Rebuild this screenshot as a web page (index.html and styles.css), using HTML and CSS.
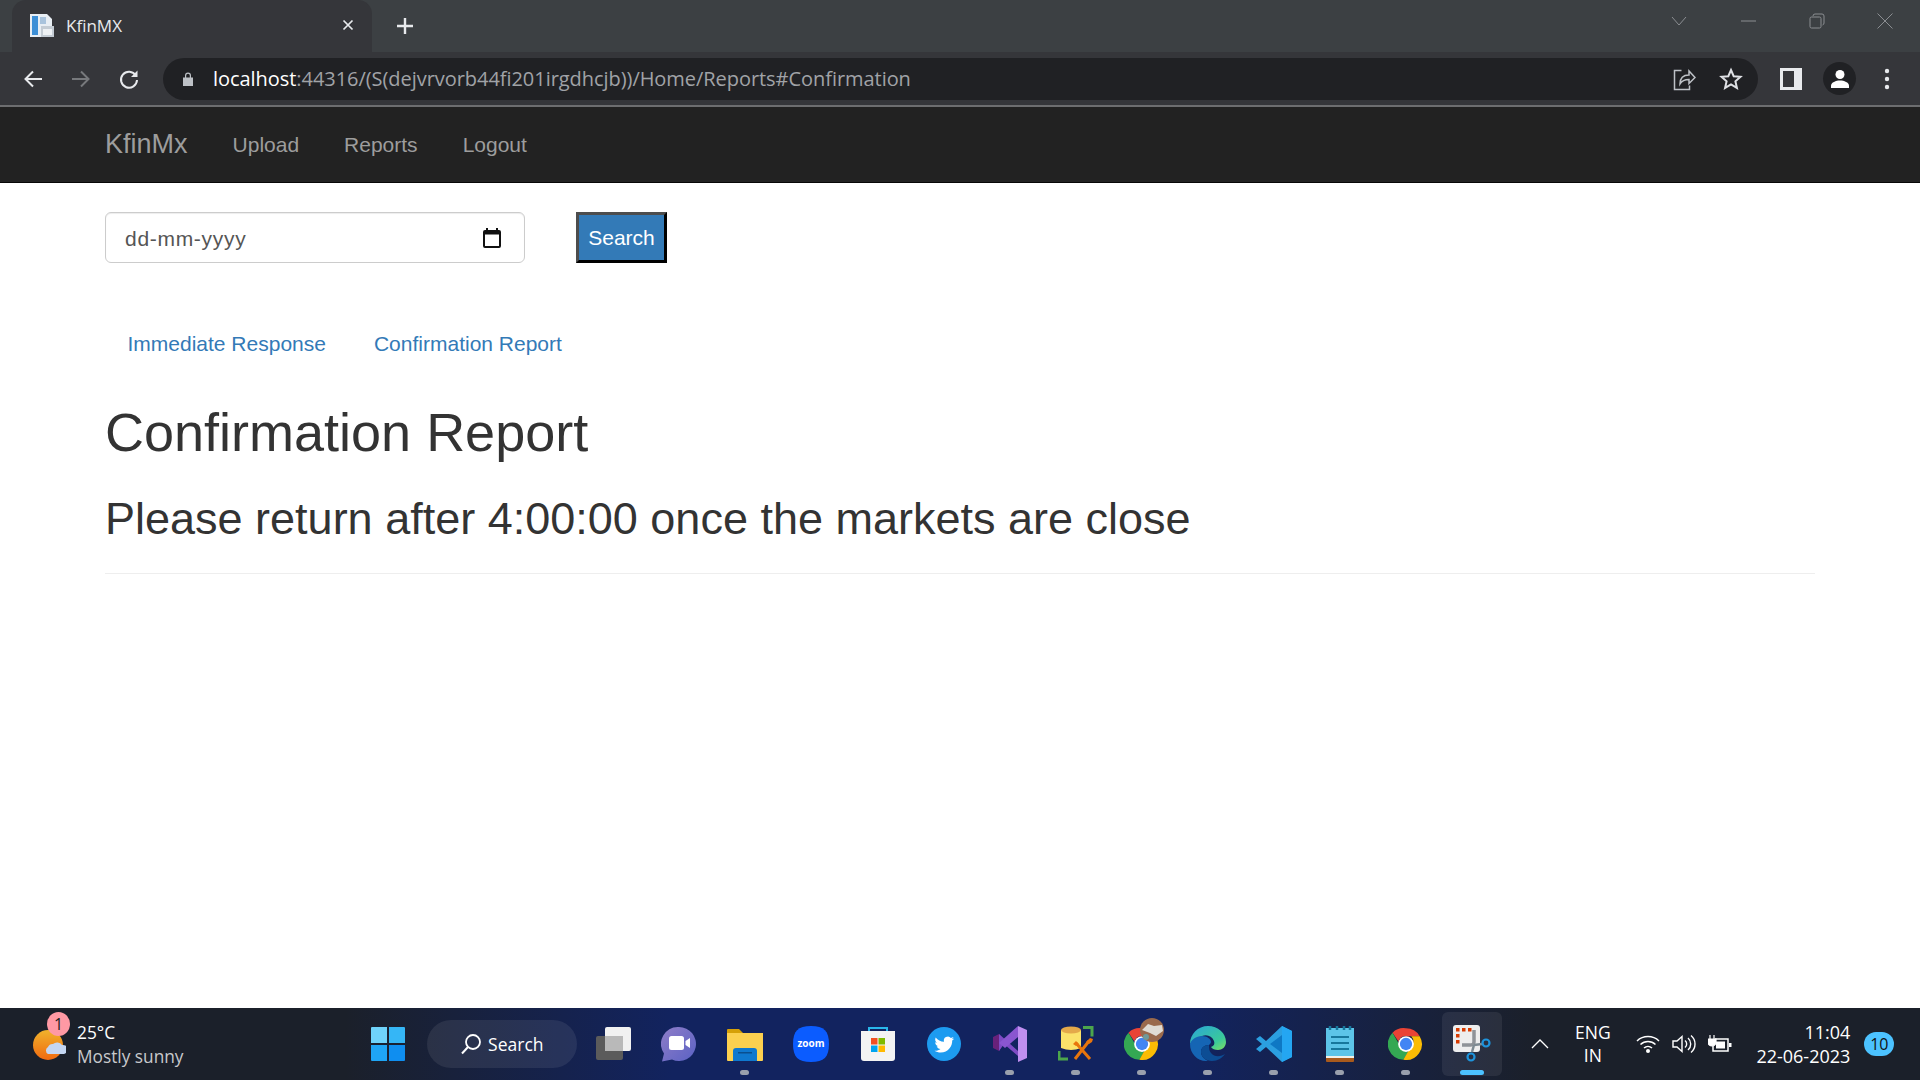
FILE: index.html
```html
<!DOCTYPE html>
<html lang="en">
<head>
	<meta charset="UTF-8">
	<title>KfinMX</title>
	<link rel="stylesheet" href="styles.css">
</head>
<body>
	<svg class="defs" width="0" height="0">
		<symbol id="chrome" viewBox="0 0 48 48">
			<path fill="#ea4335" d="M24 3a21 21 0 0 1 18.2 10.5H24a10.5 10.5 0 0 0-10 7.2L6 8.900A21 21 0 0 1 24 3z"/>
			<path fill="#34a853" d="M6 8.900l9 15.600a10.500 10.500 0 0 0 12.400 9.400l-7 11A21 21 0 0 1 6 8.900z"/>
			<path fill="#fbbc04" d="M42.200 13.500A21 21 0 0 1 20.400 44.900l9-15.500A10.500 10.500 0 0 0 31 13.500z"/>
			<circle cx="24" cy="24" r="10.500" fill="#fff"/>
			<circle cx="24" cy="24" r="8.200" fill="#4285f4"/>
		</symbol>
	</svg>

	<div class="tabstrip">
		<div class="tab">
			<svg class="favicon" width="24" height="23" viewBox="0 0 24 23">
				<path fill="#e8eef4" d="M0 0h17l5 5v18H0z"/>
				<path fill="#3d8fd6" d="M2 2h6v19H2z"/>
				<path fill="#a9c3dc" d="M10 3h6v7h-6z"/>
				<path fill="#c4ccd4" d="M11 12h13v11H11z"/>
				<path fill="#eef1f4" d="M13 15h9v6h-9z"/>
			</svg>
			<span class="tab-title">KfinMX</span>
			<svg class="tab-close" width="12" height="12" viewBox="0 0 12 12"><path d="M1.500 1.500l9 9M10.500 1.500l-9 9" stroke="#e8eaed" stroke-width="1.700"/></svg>
		</div>
		<svg class="newtab" width="20" height="20" viewBox="0 0 20 20"><path d="M10 2v16M2 10h16" stroke="#e8eaed" stroke-width="2.400"/></svg>
		<div class="winbtns">
			<svg class="win-chevron" width="16" height="16" viewBox="0 0 16 16"><path d="M1 4l7 8 7-8" fill="none" stroke="#8b8e92"/></svg>
			<svg width="16" height="16" viewBox="0 0 16 16"><path d="M0 8h15" stroke="#8b8e92"/></svg>
			<svg width="16" height="16" viewBox="0 0 16 16"><path d="M1 5.500a1.500 1.500 0 0 1 1.500-1.500h8a1.500 1.500 0 0 1 1.500 1.500v8a1.500 1.500 0 0 1-1.500 1.500h-8a1.500 1.500 0 0 1-1.500-1.500zM4 3a2 2 0 0 1 2-2h7a2 2 0 0 1 2 2v7a2 2 0 0 1-1.500 2" fill="none" stroke="#8b8e92"/></svg>
			<svg width="16" height="16" viewBox="0 0 16 16"><path d="M.5.500l15 15M15.500.500l-15 15" stroke="#8b8e92"/></svg>
		</div>
	</div>

	<div class="toolbar">
		<svg class="tool-btn" width="22" height="22" viewBox="0 0 22 22"><path d="M20 11H4M11 3.500L3.500 11l7.500 7.500" fill="none" stroke="#e8eaed" stroke-width="2"/></svg>
		<svg class="tool-btn" width="22" height="22" viewBox="0 0 22 22"><path d="M2 11h16M11 3.500l7.500 7.500-7.500 7.500" fill="none" stroke="#77797c" stroke-width="2"/></svg>
		<svg class="tool-btn" width="22" height="22" viewBox="0 0 22 22"><path d="M17.800 7.500A8 8 0 1 0 19 12" fill="none" stroke="#e8eaed" stroke-width="2"/><path fill="#e8eaed" d="M19.500 2.500V9h-6.500z"/></svg>
		<div class="omnibox">
			<svg class="lock" width="12" height="16" viewBox="0 0 12 16"><path fill="#bdc1c6" d="M1 6.500h10V15H1zM3 6.500V4.500a3 3 0 0 1 6 0v2H7.800v-2a1.800 1.800 0 0 0-3.600 0v2z"/></svg>
			<span class="url"><b>localhost</b>:44316/(S(dejvrvorb44fi201irgdhcjb))/Home/Reports#Confirmation</span>
			<svg class="omni-share" width="24" height="24" viewBox="0 0 24 24"><path d="M9.500 3.500H2.500v19h15v-4M8 17c0-6 3-9 9-9V4l6 6.500-6 6v-4c-4 0-7 1-9 4.500z" fill="none" stroke="#bdc1c6" stroke-width="1.500"/></svg>
			<svg class="omni-star" width="24" height="24" viewBox="0 0 24 24"><path d="M12 3l2.700 6.200 6.800.6-5.100 4.500 1.500 6.600L12 17.400l-5.900 3.500 1.500-6.600-5.100-4.500 6.800-.6z" fill="none" stroke="#dfe1e5" stroke-width="2"/></svg>
		</div>
		<svg class="side-panel" width="22" height="22" viewBox="0 0 22 22"><path fill="#e8eaed" fill-rule="evenodd" d="M0 0h22v22H0zM3 3v16h11V3z"/></svg>
		<div class="avatar">
			<svg width="20" height="20" viewBox="0 0 20 20"><circle cx="10" cy="5.500" r="4.500" fill="#fff"/><path fill="#fff" d="M1 19v-2.500c0-3 5-5 9-5s9 2 9 5V19z"/></svg>
		</div>
		<svg class="menu-dots" width="6" height="22" viewBox="0 0 6 22"><circle cx="3" cy="3" r="2.200" fill="#e8eaed"/><circle cx="3" cy="11" r="2.200" fill="#e8eaed"/><circle cx="3" cy="19" r="2.200" fill="#e8eaed"/></svg>
	</div>

	<nav class="navbar">
		<a class="brand">KfinMx</a>
		<a class="nav-link">Upload</a>
		<a class="nav-link">Reports</a>
		<a class="nav-link">Logout</a>
	</nav>

	<div class="container">
		<form class="search-row">
			<div class="date-input">
				<span>dd-mm-yyyy</span>
				<svg width="18" height="20" viewBox="0 0 18 20"><path fill="#111" fill-rule="evenodd" d="M3 0h2v2h8V0h2v2h1a2 2 0 0 1 2 2v14a2 2 0 0 1-2 2H2a2 2 0 0 1-2-2V4a2 2 0 0 1 2-2h1zM2 6.500V18h14V6.500z"/></svg>
			</div>
			<button class="search-btn" type="button">Search</button>
		</form>
		<ul class="pills">
			<li>Immediate Response</li>
			<li>Confirmation Report</li>
		</ul>
		<h2 class="report-title">Confirmation Report</h2>
		<h3 class="report-msg">Please return after 4:00:00 once the markets are close</h3>
		<hr class="rule">
	</div>

	<div class="taskbar">
		<div class="weather">
			<svg class="weather-icon" width="33" height="32" viewBox="0 0 33 32">
				<defs><linearGradient id="sun" x1="0" y1="0" x2="0" y2="1"><stop offset="0" stop-color="#f0b22c"/><stop offset="1" stop-color="#f06a10"/></linearGradient></defs>
				<circle cx="15" cy="16" r="15" fill="url(#sun)"/>
				<path fill="#c4d6f2" d="M15 25a4 4 0 0 1 0-7 5 5 0 0 1 5-3 6 6 0 0 1 9 1 4.500 4.500 0 0 1 2 9z"/>
			</svg>
			<span class="weather-badge">1</span>
			<div class="weather-text">
				<div>25°C</div>
				<div class="weather-sub">Mostly sunny</div>
			</div>
		</div>
		<div class="task-icons">
			<div class="slot">
				<svg width="36" height="36" viewBox="0 0 36 36"><path fill="#6fd3fb" d="M1 2a1 1 0 0 1 1-1h15v16H1z"/><path fill="#35b6f6" d="M19 1h15a1 1 0 0 1 1 1v15H19z"/><path fill="#1fa5f5" d="M1 19h16v16H2a1 1 0 0 1-1-1z"/><path fill="#0f8ef0" d="M19 19h16v15a1 1 0 0 1-1 1H19z"/></svg>
			</div>
			<div class="search-pill">
				<svg width="22" height="22" viewBox="0 0 22 22"><circle cx="13" cy="9" r="7" fill="none" stroke="#fff" stroke-width="1.800"/><path d="M8 14l-6 6.500" stroke="#fff" stroke-width="2"/></svg>
				<span>Search</span>
			</div>
			<div class="slot">
				<svg width="36" height="36" viewBox="0 0 36 36"><rect x="10" y="1" width="26" height="24" rx="2" fill="#f1f1f1"/><rect x="1" y="10" width="27" height="24" rx="2" fill="#5b5b5b"/><path fill="#b9b9b9" d="M10 10h18v15H10z"/></svg>
			</div>
			<div class="slot">
				<svg width="36" height="36" viewBox="0 0 36 36"><defs><linearGradient id="chat" x1="0" y1="0" x2="1" y2="1"><stop offset="0" stop-color="#8f7dc8"/><stop offset="1" stop-color="#5a62c4"/></linearGradient></defs><path fill="url(#chat)" d="M18 1a17 17 0 1 1-7 32.500L1 35.500l2-8A17 17 0 0 1 18 1z"/><rect x="8" y="10" width="15" height="14" rx="2.500" fill="#fff"/><path fill="#fff" d="M24.500 15l4.500-3v10l-4.500-3z"/></svg>
			</div>
			<div class="slot has-dot">
				<svg width="36" height="36" viewBox="0 0 36 36"><path fill="#d6a008" d="M0 4a1 1 0 0 1 1-1h11l4 4h20v4H0z"/><path fill="#fcd04f" d="M0 7h36v27a1 1 0 0 1-1 1H1a1 1 0 0 1-1-1z"/><path fill="#0f78cf" d="M6 35V25a3 3 0 0 1 3-3h18a3 3 0 0 1 3 3v10z"/><path fill="#0a4f8f" d="M11 26h14v1.500H11z"/></svg>
			</div>
			<div class="slot">
				<svg width="36" height="36" viewBox="0 0 36 36"><path fill="#0b5cff" d="M18 0c13 0 18 5 18 18s-5 18-18 18S0 31 0 18 5 0 18 0z"/><text x="18" y="21" class="zoom-word">zoom</text></svg>
			</div>
			<div class="slot">
				<svg width="36" height="36" viewBox="0 0 36 36"><path d="M9 9V2h18v7" fill="none" stroke="#29b6ea" stroke-width="2"/><path fill="#f3f3f3" d="M1 5h34v27a3 3 0 0 1-3 3H4a3 3 0 0 1-3-3z"/><path fill="#f25022" d="M11 12h6.500v6.500H11z"/><path fill="#7fba00" d="M18.500 12H25v6.500h-6.500z"/><path fill="#00a4ef" d="M11 19.500h6.500V26H11z"/><path fill="#ffb900" d="M18.500 19.500H25V26h-6.500z"/></svg>
			</div>
			<div class="slot">
				<svg width="34" height="34" viewBox="0 0 34 34"><circle cx="17" cy="17" r="17" fill="#1d9bf0"/><path fill="#fff" d="M27 11.500c-.8.400-1.500.500-2.300.700.800-.500 1.500-1.200 1.800-2.200-.8.500-1.600.800-2.600 1a4 4 0 0 0-6.900 3.700c-3.400-.2-6.300-1.800-8.300-4.300-1 1.800-.500 4.100 1.300 5.300-.7 0-1.300-.2-1.800-.500 0 2 1.400 3.700 3.300 4-.6.200-1.200.2-1.800.1.500 1.600 2 2.800 3.800 2.800-1.700 1.300-3.900 2-6 1.700 1.800 1.200 4 1.800 6.200 1.800 7.500 0 11.800-6.400 11.500-12 .8-.500 1.400-1.200 1.800-2.100z"/></svg>
			</div>
			<div class="slot has-dot">
				<svg width="36" height="36" viewBox="0 0 36 36"><path fill="#68217a" d="M1 11l6-3 6 7-6 10-6-3z"/><path fill="#7e4bc4" d="M7 8l19 17v5L12 18l-5 7V8z"/><path fill="#8a56d0" d="M26 0v11L13 22l-6-5z"/><path fill="#c08ff0" d="M26 0l9 4v28l-9 4z"/></svg>
			</div>
			<div class="slot has-dot">
				<svg width="36" height="36" viewBox="0 0 36 36"><path fill="#fbe26a" d="M3 4h20v18q-10 4-20 0z"/><ellipse cx="13" cy="4" rx="10" ry="3.500" fill="#e4a94a"/><path d="M1 25v8h9" fill="none" stroke="#4ca64c" stroke-width="3"/><path d="M25 1.500h9v9" fill="none" stroke="#4ca64c" stroke-width="3"/><path d="M18 17l14 16M31 15L17 33" stroke="#e8750c" stroke-width="3" fill="none"/><path d="M28 16l4-4 3 1-1 3-3 2zM15 18l3-3 3 3-3 2z" fill="#e8750c"/></svg>
			</div>
			<div class="slot has-dot">
				<svg class="chrome-icon" width="36" height="36"><use href="#chrome"/></svg>
				<svg class="profile-badge" width="24" height="24" viewBox="0 0 24 24"><circle cx="12" cy="12" r="12" fill="#9a6a4c"/><path fill="#e0dcd4" d="M2 12l6-6 6 2 8-1 1 6-7 5-6-3z"/><circle cx="6" cy="19" r="3" fill="#6f9a9a"/></svg>
			</div>
			<div class="slot has-dot">
				<svg width="36" height="36" viewBox="0 0 36 36"><defs><linearGradient id="edge" x1="0" y1="0" x2="1" y2="1"><stop offset="0" stop-color="#2aa5d8"/><stop offset=".7" stop-color="#3ac99a"/><stop offset="1" stop-color="#7fe060"/></linearGradient></defs><path fill="url(#edge)" d="M18 0c10 0 18 7 18 16 0 5-4 8-8 8-3 0-6-1-7-3 3-1 4-3 3-6-2-5-7-7-12-5C6 12 1 17 0 18 0 8 8 0 18 0z"/><path fill="#1565b4" d="M0 18c1-4 6-8 12-8 5 0 9 3 9 6 0 1-1 2-2 3-5 0-8 3-8 7 0 4 3 7 7 9-10 1-18-7-18-17z"/><path fill="#0c4d94" d="M19 19c-5 0-8 3-8 7 0 5 5 9 11 9 6 0 10-3 13-7-3 2-10 4-14-1-2-2-2-5-2-8z"/></svg>
			</div>
			<div class="slot has-dot">
				<svg width="36" height="36" viewBox="0 0 36 36"><path fill="#2b9fe0" d="M26 0l10 5v26l-10 5-16-15-6 5-4-3 6-5-6-5 4-3 6 5z"/><path fill="#0e78c4" d="M26 9L14 18l12 9z"/><path fill="#24a6f2" d="M26 0l10 5v26l-10 5z"/></svg>
			</div>
			<div class="slot has-dot">
				<svg width="28" height="36" viewBox="0 0 28 36"><path fill="#5cc4e8" d="M0 2h28v31H0z"/><path fill="#f0f0e8" d="M0 30h28v2H0z"/><path fill="#a85a1c" d="M0 32h28v3a1 1 0 0 1-1 1H1a1 1 0 0 1-1-1z"/><path d="M5 11h18M5 17h18M5 23h18" stroke="#17779c" stroke-width="2"/><path d="M4 0v4M11 0v4M18 0v4M24 0v4" stroke="#17779c" stroke-width="2.500"/></svg>
			</div>
			<div class="slot has-dot">
				<svg width="36" height="36"><use href="#chrome"/></svg>
			</div>
			<div class="slot snip">
				<svg width="38" height="38" viewBox="0 0 38 38"><rect x="0" y="0" width="27" height="27" rx="3" fill="#eee"/><path d="M3 3h3.500v3.500H3zM9 3h3.500v3.500H9zM15 3h3.500v3.500H15zM3 9h3.500v3.500H3zM3 15h3.500v3.500H3z" fill="#d83b01"/><path d="M21 5v12a3 3 0 0 1-3 3H9" fill="none" stroke="#8f9398" stroke-width="3.500"/><path d="M21 20l8-1M21 20l-2 7" stroke="#7e8a92" stroke-width="2.500"/><circle cx="33" cy="18" r="3.500" fill="none" stroke="#1e94dc" stroke-width="2.200"/><circle cx="18" cy="32" r="3.500" fill="none" stroke="#1e94dc" stroke-width="2.200"/></svg>
			</div>
		</div>
		<div class="tray">
			<svg class="tray-caret" width="18" height="10" viewBox="0 0 18 10"><path d="M1 9l8-8 8 8" fill="none" stroke="#fff" stroke-width="1.300"/></svg>
			<div class="lang">ENG<br>IN</div>
			<svg class="tray-icon" width="24" height="20" viewBox="0 0 24 20"><path d="M1 7a16 16 0 0 1 22 0M4.500 10.500a11 11 0 0 1 15 0M8 14a6 6 0 0 1 8 0" fill="none" stroke="#fff" stroke-width="1.500"/><circle cx="12" cy="17" r="2" fill="#fff"/></svg>
			<svg class="tray-icon" width="24" height="20" viewBox="0 0 24 20"><path d="M1 7v6h4l5 4.500V2.500L5 7z" fill="none" stroke="#fff" stroke-width="1.400"/><path d="M13 6.500a4.500 4.500 0 0 1 0 7M16 4a8 8 0 0 1 0 12M19 1.500a11 11 0 0 1 0 17" fill="none" stroke="#fff" stroke-width="1.400"/></svg>
			<svg class="tray-icon" width="24" height="20" viewBox="0 0 24 20"><path d="M2 1v4M6 1v4M0 5h8v3a4 4 0 0 1-8 0z" stroke="#fff" fill="#fff" stroke-width="1.200"/><path d="M7 5h13v12H5v-5" fill="none" stroke="#fff" stroke-width="1.500"/><path fill="#fff" d="M8 7.500h9v7H8zM21 9h2.500v4H21z"/></svg>
			<div class="clock"><div>11:04</div><div>22-06-2023</div></div>
			<span class="notif">10</span>
		</div>
	</div>
</body>
</html>
```

FILE: styles.css
```css
* {margin: 0;padding: 0;box-sizing: border-box;}
html, body {width: 1920px;height: 1080px;overflow: hidden;}
body {display: flex;flex-direction: column;background: #fff;font-family: "Liberation Sans", Arial, sans-serif;color: #333;}
svg {display: block;flex: none;}
.defs {position: absolute;}

/* browser chrome */
.tabstrip {display: flex;align-items: flex-end;height: 52px;background: #3c4043;flex: none;}
.tab {display: flex;align-items: center;width: 360px;height: 52px;margin-left: 12px;padding: 0 18px 2px 18px;background: #35363a;border-radius: 14px 14px 0 0;}
.tab-title {flex: 1;margin-left: 12px;font: 17px "Open Sans", sans-serif;color: #e8eaed;}
.newtab {margin: 0 0 16px 23px;}
.winbtns {display: flex;gap: 52px;margin: 0 27px 23px auto;}
.win-chevron {margin-right: 2px;}
.toolbar {display: flex;align-items: center;height: 53px;background: #35363a;padding-left: 22px;flex: none;}
.tool-btn {margin-right: 26px;}
.tool-btn:nth-child(3) {margin-right: 23px;}
.omnibox {display: flex;align-items: center;width: 1595px;height: 42px;background: #202124;border-radius: 21px;padding: 0 15px 0 19px;}
.url {flex: 1;margin-left: 19px;font: 20px "Open Sans", sans-serif;letter-spacing: -.05px;color: #a0a3a7;white-space: nowrap;}
.url b {font-weight: 400;color: #fff;}
.omni-share {margin-right: 23px;}
.side-panel {margin-left: 22px;}
.avatar {display: flex;align-items: center;justify-content: center;width: 33px;height: 33px;margin-left: 21px;background: #202124;border-radius: 50%;}
.menu-dots {margin-left: 28px;}

/* page */
.navbar {display: flex;align-items: center;height: 78px;padding-left: 105px;background: #222;border-top: 2px solid #6d6e70;border-bottom: 1px solid #080808;flex: none;}
.brand {font-size: 27px;color: #9d9d9d;margin-right: 45px;}
.nav-link {font-size: 21px;color: #9d9d9d;margin-right: 45px;}
.container {flex: 1;padding: 29px 105px 0;}
.search-row {display: flex;gap: 51px;}
.date-input {display: flex;align-items: center;justify-content: space-between;width: 420px;height: 51px;padding: 2px 23px 0 19px;border: 1px solid #ccc;border-radius: 6px;font-size: 21px;letter-spacing: .7px;color: #555;box-shadow: inset 0 1px 1px rgba(0,0,0,.075);}
.date-input svg {margin-top: -2px;}
.search-btn {width: 91px;height: 51px;font: 21px "Liberation Sans", Arial, sans-serif;color: #fff;background: #337ab7;border: 3px solid;border-color: #4d4d4d #000 #000 #4d4d4d;}
.pills {display: flex;gap: 3px;margin-top: 51px;list-style: none;}
.pills li {padding: 15px 22.500px;font-size: 21px;line-height: 30px;color: #337ab7;}
.report-title {margin-top: 28px;font-size: 54px;line-height: 60px;font-weight: 400;}
.report-msg {margin-top: 32px;font-size: 45px;line-height: 50px;font-weight: 400;}
.rule {margin-top: 29px;border: 0;border-top: 1px solid #eee;}

/* windows taskbar */
.taskbar {display: flex;align-items: center;height: 72px;flex: none;color: #fff;background: linear-gradient(90deg, #1b202a 0, #1b202a 18%, #12235f 35%, #12235f 62%, #1b202a 80%, #1b202a 100%);font-family: "Open Sans", "Noto Sans", sans-serif;}
.weather {position: relative;display: flex;align-items: center;width: 355px;padding-left: 33px;}
.weather-icon {margin-top: 2px;}
.weather-badge {position: absolute;left: 47px;top: -7px;width: 23px;height: 24px;border-radius: 50%;background: #ff99a4;color: #222;font-size: 16px;line-height: 24px;text-align: center;}
.weather-text {margin: 2px 0 0 11px;font-size: 17.300px;line-height: 24px;}
.weather-sub {color: #c8c9cc;}
.task-icons {display: flex;align-items: center;}
.slot {position: relative;display: flex;align-items: center;justify-content: center;width: 66.100px;height: 64px;border-radius: 6px;}
.has-dot::after {content: "";position: absolute;left: 28px;bottom: 1px;width: 9px;height: 5px;border-radius: 3px;background: #9aa0ad;}
.snip {background: rgba(255,255,255,.07);width: 60px;margin: 0 3px;}
.snip::after {content: "";position: absolute;left: 18px;bottom: 1px;width: 24px;height: 5px;border-radius: 3px;background: #4cc2ff;}
.profile-badge {position: absolute;left: 31px;top: 6px;}
.zoom-word {font: 700 10px "Open Sans", sans-serif;fill: #fff;text-anchor: middle;}
.search-pill {display: flex;align-items: center;gap: 6px;width: 150px;height: 48px;margin: 0 3px 0 6px;padding-left: 33px;border-radius: 24px;background: rgba(255,255,255,.08);font-size: 17.500px;}
.tray {display: flex;align-items: center;margin-left: 26px;}
.lang {width: 87px;text-align: center;font-size: 17.500px;line-height: 23px;}
.tray-icon {margin-left: 12px;}
.lang + .tray-icon {margin-left: 0;}
.clock {width: 118px;text-align: right;font-size: 18px;line-height: 24px;}
.notif {width: 30px;height: 24px;margin-left: 14px;border-radius: 12px;background: #4cc2ff;color: #111;text-align: center;font-size: 16px;line-height: 24px;}
```
